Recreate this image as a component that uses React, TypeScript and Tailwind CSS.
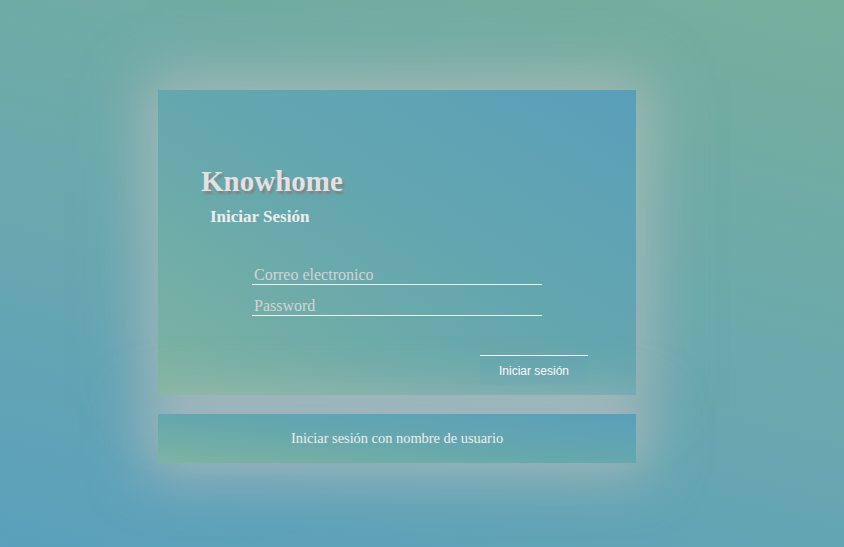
import { useState } from "react";

const App = () => {
  const [formData, setFormData] = useState({ email: "", password: "" });

  const handleChange = (e: { target: { name: any; value: any } }) => {
    setFormData({ ...formData, [e.target.name]: e.target.value });
  };

  return (
    <div className="w-full h-[547px] overflow-hidden bg-[linear-gradient(15deg,#5ba0bc_0%,#6aa9ad_50%,#77af9c_100%)] font-['Liberation_Serif',serif]">
      <div className="ml-[158px] pt-[90px] w-[478px] flex flex-col">
        <main className="h-[305px] flex flex-col pt-[75px] pb-[10px] bg-[linear-gradient(to_bottom_left,#5a9fba_0%,#66a8ad_55%,#7eb4a0_100%)] shadow-[0_0_55px_12px_rgba(205,195,195,0.6)]">
          <h1 className="ml-[43px] text-[29px] leading-[32px] font-bold text-[#e2e2e2] [text-shadow:2px_3px_2px_#7d8585]">
            Knowhome
          </h1>
          <h2 className="ml-[52px] mt-[10px] text-[17px] leading-[20px] font-bold text-[#eeeeee]">
            Iniciar Sesión
          </h2>
          <form className="flex flex-col ml-[94px] mt-[34px] w-[290px] gap-[7px]">
            <input
              type="email"
              name="email"
              value={formData.email}
              onChange={handleChange}
              placeholder="Correo electronico"
              className="h-[24px] pt-[4px] px-[2px] bg-transparent border-b border-[#eeeeee] outline-none text-[16px] text-[#eeeeee] placeholder:text-[#d4d4d4]"
            />
            <input
              type="password"
              name="password"
              value={formData.password}
              onChange={handleChange}
              placeholder="Password"
              className="h-[24px] pt-[5px] px-[2px] bg-transparent border-b border-[#eeeeee] outline-none text-[16px] text-[#eeeeee] placeholder:text-[#d4d4d4]"
            />
          </form>
          <div className="flex justify-end pr-[48px] mt-[39px]">
            <button
              type="button"
              className="w-[108px] h-[30px] border-t border-[#f4f4f4] bg-[rgba(90,160,180,0.25)] text-white text-[12px] font-['Liberation_Sans',sans-serif] cursor-pointer"
            >
              Iniciar sesión
            </button>
          </div>
        </main>
        <div className="mt-[19px] h-[49px] flex items-center justify-center bg-[linear-gradient(to_bottom_left,#5a9fba_0%,#66a8ad_55%,#7eb4a0_100%)] shadow-[0_0_55px_12px_rgba(205,195,195,0.6)] text-[14.4px] text-[#eeeeee]">
          Iniciar sesión con nombre de usuario
        </div>
      </div>
    </div>
  );
};

export default App;
